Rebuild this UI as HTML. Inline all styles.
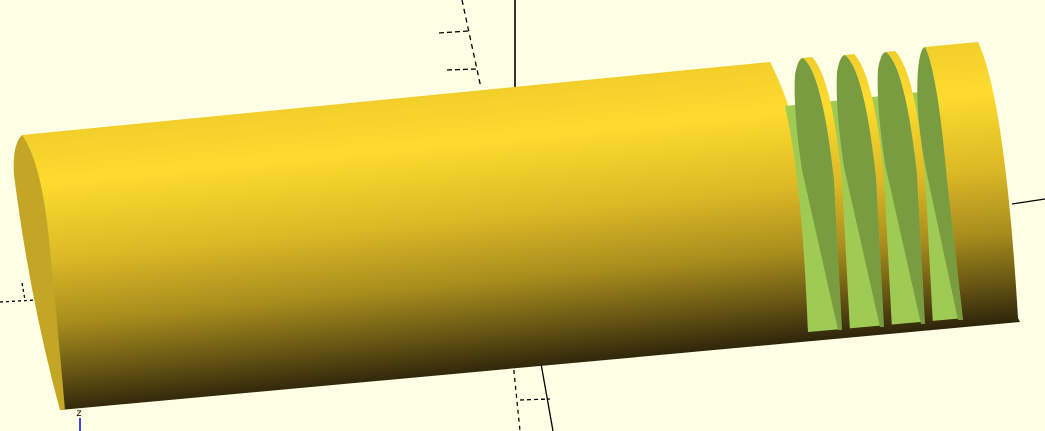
<!DOCTYPE html>
<html><head><meta charset="utf-8"><style>html,body{margin:0;padding:0;background:#ffffe5;overflow:hidden}svg{display:block}</style></head><body>
<svg width="1045" height="431" viewBox="0 0 1045 431" xmlns="http://www.w3.org/2000/svg">
<defs>
<linearGradient id="g" gradientUnits="userSpaceOnUse" x1="500" y1="88" x2="527" y2="368">
<stop offset="0" stop-color="#f2ce2b"/>
<stop offset="0.18" stop-color="#fddb2e"/>
<stop offset="0.45" stop-color="#dcb926"/>
<stop offset="0.68" stop-color="#a88d1d"/>
<stop offset="0.85" stop-color="#6a5814"/>
<stop offset="1" stop-color="#2f260b"/>
</linearGradient>
<linearGradient id="g2" gradientUnits="userSpaceOnUse" x1="950" y1="45" x2="975" y2="325">
<stop offset="0" stop-color="#f2ce2b"/>
<stop offset="0.18" stop-color="#fddb2e"/>
<stop offset="0.45" stop-color="#dcb926"/>
<stop offset="0.68" stop-color="#a88d1d"/>
<stop offset="0.85" stop-color="#6a5814"/>
<stop offset="1" stop-color="#2f260b"/>
</linearGradient>
</defs>
<g stroke="#000" stroke-width="1.3" fill="none">
<path d="M462,0 L481,88" stroke-dasharray="5,4"/>
<path d="M439,33 L468,31 M447,70 L476,69" stroke-dasharray="5,3"/>
<path d="M515,0 L515,130" stroke-width="1.6"/>
<path d="M1012,204 L1045,199"/>
<path d="M513,362 L520,431" stroke-dasharray="4,4"/>
<path d="M540,358 L553,431"/>
<path d="M520,400 L550,399" stroke-dasharray="4,3"/>
<path d="M0,302 L36,300 M22,283 L25,300" stroke-dasharray="3,3"/>
</g>
<!-- body -->
<path d="M22,135 L770,62 Q800,120 806,200 L990,185 L1018,318 L1020,322 L60,410 Z" fill="url(#g)"/>
<!-- left end cap -->
<path d="M22,135 Q12,145 14,175 Q30,300 60,410 L65,410 Q58,330 48,230 Q40,160 22,135 Z" fill="#c4a627"/>
<!-- green groove core -->
<path d="M785,106 L930,91 L960,95 L965,318 L808,332 Z" fill="#9fcb55"/>
<g id="r">
<path d="M795,75 Q798,58 803,58 Q822,72 834,180 L842,330 L838,330 L802,170 Q793,110 795,75 Z" fill="#7a9c40"/>
<path d="M803,58 L812,57 Q832,78 842,180 L850,332 L842,330 L834,180 Q822,72 803,58 Z" fill="url(#g)"/>
</g>
<use href="#r" x="42" y="-3"/>
<use href="#r" x="83" y="-6"/>
<!-- end cap -->
<path d="M925,47 L978,42 Q1005,100 1018,318 L963,320 L947,180 Q937,70 925,47 Z" fill="url(#g2)"/>
<path d="M918,70 Q920,48 925,47 Q937,70 947,180 L963,320 L958,320 L925,165 Q915,110 918,70 Z" fill="#7a9c40"/>
<!-- main body right edge over grooves -->
<path d="M770,62 Q800,120 808,335 L790,337 Q785,150 770,62 Z" fill="url(#g)"/>
<path d="M80,418 L80,431" stroke="#0000ff" stroke-width="1.5"/>
<text x="76" y="416" font-family="Liberation Mono, monospace" font-size="10" fill="#000">z</text>
</svg>
</body></html>
